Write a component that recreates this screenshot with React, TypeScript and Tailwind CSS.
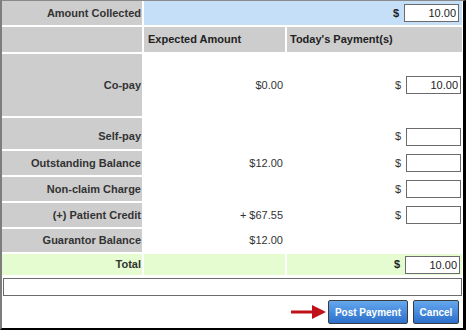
import React from 'react';

const labelCell =
  'bg-[#cdcdcd] flex items-center justify-end pr-px font-bold text-[#333]';

const MoneyInput = ({ value = '' }: { value?: string }) => (
  <input
    type="text"
    defaultValue={value}
    className="w-[55px] h-[18px] border border-[#6b6b6b] bg-white text-right pr-[2px] text-[11px] text-[#222] outline-none"
  />
);

const PayCell = ({ value, bold }: { value?: string; bold?: boolean }) => (
  <div className="flex items-center justify-end pr-px gap-[5px]">
    <span className={bold ? 'font-bold text-[#222]' : 'text-[#333]'}>$</span>
    <MoneyInput value={value} />
  </div>
);

const App = () => {
  return (
    <div className="w-[466px] h-[330px] bg-white border-l-2 border-l-[#7d7d7d] border-t border-t-[#8a8a8a] border-r-[3px] border-r-black border-b-2 border-b-black pr-px font-['Liberation_Sans',Arial,sans-serif] text-[11px]">
      <div className="grid grid-cols-[140px_141px_175px] gap-[2px]">
        {/* amount collected */}
        <div className={`${labelCell} h-[24px] bg-[#c4dff7]`}>Amount Collected</div>
        <div className="col-span-2 bg-[#c4dff7] flex items-center justify-end pr-[3px] gap-[5px]">
          <span className="font-bold text-[#222]">$</span>
          <MoneyInput value="10.00" />
        </div>

        {/* headers */}
        <div className="bg-[#cdcdcd] h-[25px]" />
        <div className="bg-[#cdcdcd] flex items-center pl-1 font-bold text-[#222]">Expected Amount</div>
        <div className="bg-[#cdcdcd] flex items-center pl-[3px] font-bold text-[#222]">Today's Payment(s)</div>

        {/* co-pay */}
        <div className={`${labelCell} h-[62px]`}>Co-pay</div>
        <div className="flex items-center justify-end pr-[2px] text-[#333]">$0.00</div>
        <PayCell value="10.00" />

        {/* self-pay */}
        <div className={`${labelCell} h-[31px] pt-[6px]`}>Self-pay</div>
        <div />
        <div className="pt-[6px] flex justify-end">
          <PayCell />
        </div>

        <div className={`${labelCell} h-[24px]`}>Outstanding Balance</div>
        <div className="flex items-center justify-end pr-[2px] text-[#333]">$12.00</div>
        <PayCell />

        <div className={`${labelCell} h-[24px]`}>Non-claim Charge</div>
        <div />
        <PayCell />

        <div className={`${labelCell} h-[24px]`}>(+) Patient Credit</div>
        <div className="flex items-center justify-end pr-[2px] text-[#333]">+ $67.55</div>
        <PayCell />

        <div className={`${labelCell} h-[23px]`}>Guarantor Balance</div>
        <div className="flex items-center justify-end pr-[2px] text-[#333]">$12.00</div>
        <div />

        {/* total */}
        <div className={`${labelCell} h-[21px] bg-[#e4fcd0]`}>Total</div>
        <div className="bg-[#e4fcd0]" />
        <div className="bg-[#e4fcd0]">
          <div className="h-full flex items-center justify-end pr-[2px] gap-[5px]">
            <span className="font-bold text-[#222]">$</span>
            <MoneyInput value="10.00" />
          </div>
        </div>
      </div>

      <input
        type="text"
        className="block mt-[3px] ml-px w-[459px] h-[18px] border border-[#6b6b6b] outline-none"
      />

      <div className="mt-[4px] flex items-center justify-end pr-[3px]">
        <svg width="36" height="24" viewBox="0 0 36 24" className="mr-px">
          <rect x="0" y="10.5" width="23" height="3" fill="#bf1118" />
          <polygon points="21,5 35,12 21,19" fill="#bf1118" />
        </svg>
        <button
          type="button"
          className="h-[24px] w-[80px] rounded-[2px] border border-[#3c3c3c] bg-gradient-to-b from-[#64a8ee] to-[#2b6fcb] text-[10px] font-bold text-white"
        >
          Post Payment
        </button>
        <button
          type="button"
          className="ml-[5px] h-[24px] w-[46px] rounded-[2px] border border-[#3c3c3c] bg-gradient-to-b from-[#64a8ee] to-[#2b6fcb] text-[10px] font-bold text-white"
        >
          Cancel
        </button>
      </div>
    </div>
  );
};

export default App;
